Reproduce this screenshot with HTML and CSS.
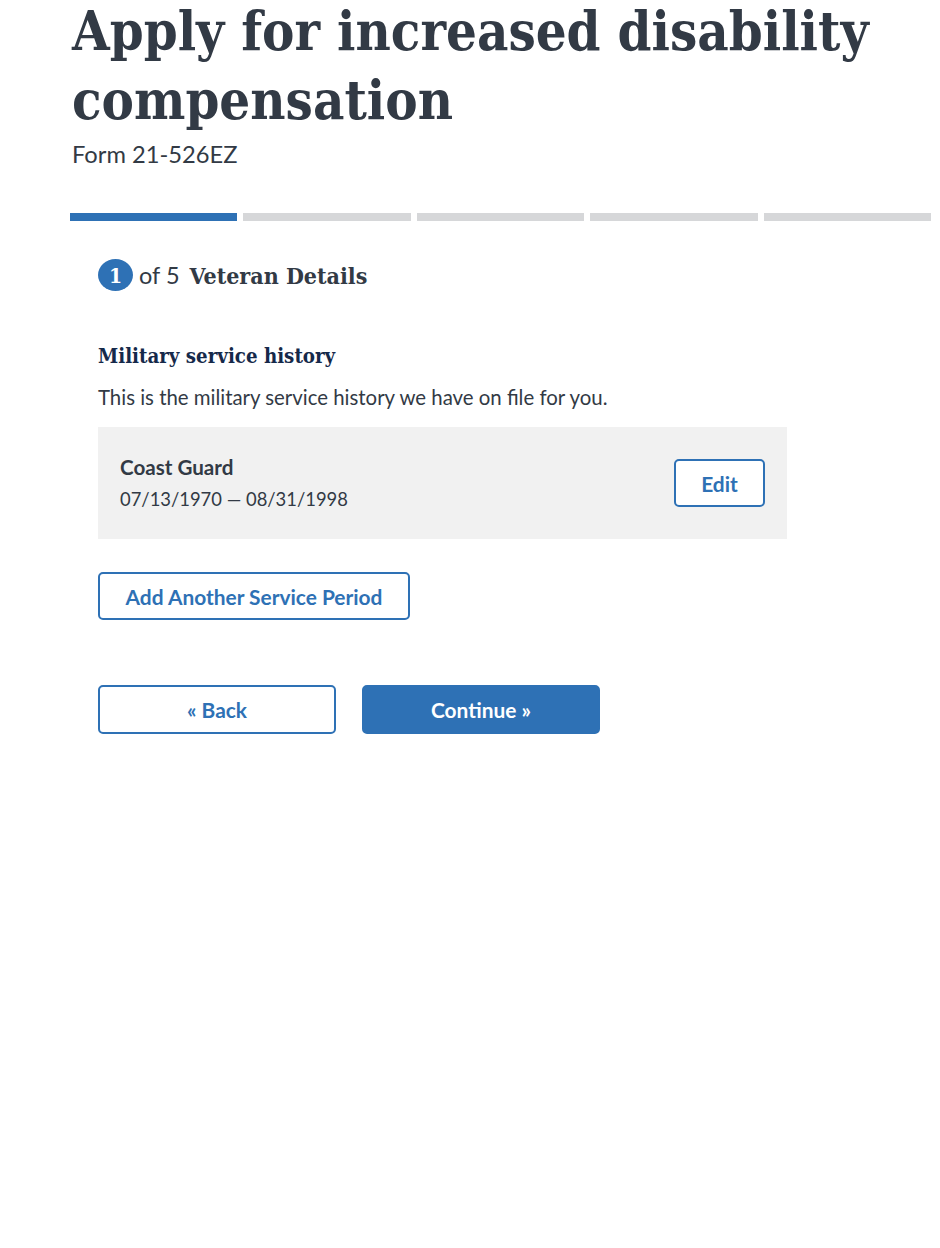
FILE: index.html
```html
<!DOCTYPE html>
<html lang="en">
<head>
<meta charset="utf-8">
<title>Apply for increased disability compensation</title>
<link rel="stylesheet" href="styles.css">
</head>
<body>
<main class="page">
  <header class="intro">
    <h1 class="title">Apply for increased disability compensation</h1>
    <p class="subtitle">Form 21-526EZ</p>
  </header>
  <div class="progress">
    <span class="seg seg-done"></span>
    <span class="seg"></span>
    <span class="seg"></span>
    <span class="seg"></span>
    <span class="seg"></span>
  </div>
  <section class="form">
    <h2 class="step">
      <span class="step-num">1</span>
      <span class="step-of">of 5</span>
      <span class="step-name">Veteran Details</span>
    </h2>
    <h3 class="section-title">Military service history</h3>
    <p class="section-text">This is the military service history we have on file for you.</p>
    <div class="card">
      <div class="card-info">
        <div class="card-branch">Coast Guard</div>
        <div class="card-dates">07/13/1970 — 08/31/1998</div>
      </div>
      <button class="btn btn-outline btn-edit" type="button">Edit</button>
    </div>
    <button class="btn btn-outline btn-add" type="button">Add Another Service Period</button>
    <div class="nav">
      <button class="btn btn-outline btn-nav" type="button">« Back</button>
      <button class="btn btn-primary btn-nav" type="button">Continue »</button>
    </div>
  </section>
</main>
</body>
</html>
```

FILE: styles.css
```css
* { box-sizing: border-box; }

body {
  margin: 0;
  background: #ffffff;
  font-family: "Lato", "Open Sans", sans-serif;
  color: #323a45;
}

.page {
  padding: 0 9px 0 70px;
}

.title {
  margin: -3px 0 0 2px;
  font-family: "DejaVu Serif Condensed", "DejaVu Serif", serif;
  font-weight: 700;
  font-size: 54px;
  line-height: 69px;
  color: #323a45;
}

.subtitle {
  margin: 4px 0 0 2px;
  font-size: 23.7px;
  line-height: 30px;
  color: #323a45;
}

.progress {
  display: flex;
  gap: 6px;
  margin-top: 44px;
}

.seg {
  flex: 1;
  height: 8px;
  background: #d6d7d9;
}

.seg-done {
  background: #2e71b5;
}

.form {
  padding-left: 28px;
  width: 717px;
}

.step {
  display: flex;
  align-items: center;
  margin: 38px 0 0;
  font-weight: 400;
}

.step-num {
  display: inline-flex;
  align-items: center;
  justify-content: center;
  width: 35px;
  height: 32px;
  border-radius: 50%;
  background: #2e71b5;
  color: #ffffff;
  font-family: "DejaVu Serif Condensed", "DejaVu Serif", serif;
  font-weight: 700;
  font-size: 21px;
}

.step-of {
  margin-left: 6px;
  font-size: 23.5px;
  color: #323a45;
}

.step-name {
  margin-left: 10px;
  font-family: "DejaVu Serif Condensed", "DejaVu Serif", serif;
  font-weight: 700;
  font-size: 23px;
  color: #323a45;
}

.section-title {
  margin: 52px 0 0;
  font-family: "DejaVu Serif Condensed", "DejaVu Serif", serif;
  font-weight: 700;
  font-size: 20.3px;
  line-height: 26px;
  color: #15294a;
}

.section-text {
  margin: 14px 0 0;
  font-size: 20.4px;
  line-height: 28px;
  color: #323a45;
}

.card {
  display: flex;
  align-items: center;
  justify-content: space-between;
  margin-top: 16px;
  width: 689px;
  height: 112px;
  padding: 0 22px;
  background: #f1f1f1;
}

.card-branch {
  font-weight: 700;
  font-size: 20.6px;
  line-height: 28px;
  color: #323a45;
}

.card-dates {
  margin-top: 4px;
  font-size: 18.4px;
  line-height: 28px;
  color: #323a45;
}

.btn {
  font-family: "Lato", "Open Sans", sans-serif;
  font-weight: 700;
  font-size: 20.9px;
  height: 48px;
  border-radius: 5px;
  cursor: pointer;
}

.btn-outline {
  background: #ffffff;
  border: 2px solid #2e71b5;
  color: #2e71b5;
}

.btn-primary {
  background: #2e71b5;
  border: 2px solid #2e71b5;
  color: #ffffff;
}

.btn-edit {
  width: 91px;
}

.btn-add {
  display: block;
  margin-top: 33px;
  width: 312px;
}

.nav {
  display: flex;
  gap: 26px;
  margin-top: 65px;
}

.btn-nav {
  width: 238px;
  height: 49px;
}
```
